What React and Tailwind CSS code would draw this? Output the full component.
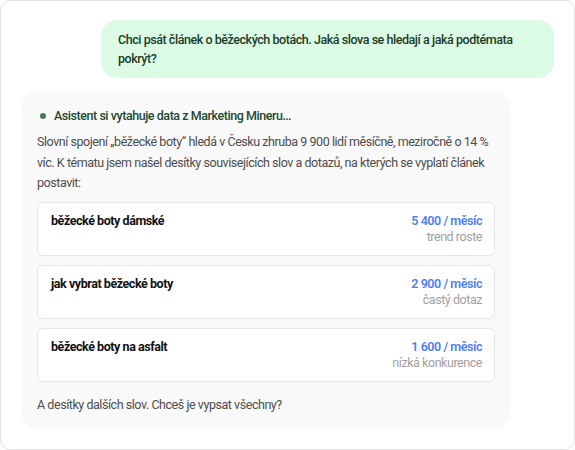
import React from "react";

const keywords = [
  { title: "běžecké boty dámské", volume: "5 400 / měsíc", note: "trend roste" },
  { title: "jak vybrat běžecké boty", volume: "2 900 / měsíc", note: "častý dotaz" },
  { title: "běžecké boty na asfalt", volume: "1 600 / měsíc", note: "nízká konkurence" },
];

export default function App() {
  return (
    <div
      className="h-[450px] w-[575px] bg-white border border-[#e3e3e3] rounded-[10px] px-5 pt-[19px] flex flex-col gap-3.5 text-[12.5px] tracking-[-0.45px]"
      style={{ fontFamily: "Roboto, 'Liberation Sans', sans-serif" }}
    >
      {/* user message */}
      <div className="self-end max-w-[85%] bg-[#dcfbe4] text-[#1d3b29] font-medium rounded-2xl px-[17px] py-2.5 leading-[19px]">
        Chci psát článek o běžeckých botách. Jaká slova se hledají a jaká podtémata pokrýt?
      </div>

      {/* assistant reply */}
      <div className="w-[490px] bg-[#f9f9f9] rounded-2xl px-4 pt-3.5 pb-[13px]">
        <div className="flex items-center gap-2 h-5 pl-[3px]">
          <span className="w-[6px] h-[6px] rounded-full bg-[#4b7a58]" />
          <span className="font-medium text-[#1d4a31]">Asistent si vytahuje data z Marketing Mineru…</span>
        </div>
        <p className="mt-1.5 text-[#4d4d4d] leading-[20.5px]">
          Slovní spojení „běžecké boty“ hledá v Česku zhruba 9 900 lidí měsíčně, meziročně o 14 % víc. K tématu jsem našel desítky souvisejících slov a dotazů, na kterých se vyplatí článek postavit:
        </p>
        <div className="mt-2 flex flex-col gap-[9px]">
          {keywords.map((k) => (
            <div
              key={k.title}
              className="bg-white border border-[#e5e5e5] rounded-md pl-[13px] pr-3 py-2.5 flex justify-between leading-4"
            >
              <div className="font-bold text-[#111]">{k.title}</div>
              <div className="text-right">
                <div className="font-semibold text-[#4f7ef7]">{k.volume}</div>
                <div className="text-[#a0a0a0]">{k.note}</div>
              </div>
            </div>
          ))}
        </div>
        <p className="mt-[13px] text-[#4d4d4d] leading-5">A desítky dalších slov. Chceš je vypsat všechny?</p>
      </div>
    </div>
  );
}
